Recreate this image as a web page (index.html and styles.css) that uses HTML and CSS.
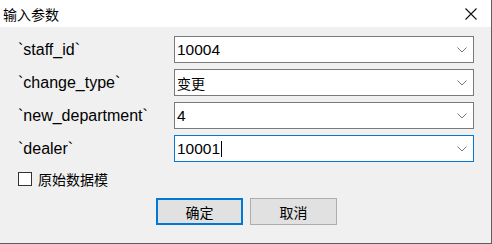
FILE: index.html
```html
<!DOCTYPE html>
<html lang="zh">
<head>
<meta charset="utf-8">
<title>输入参数</title>
<link rel="stylesheet" href="styles.css">
</head>
<body>
<div class="window">
  <div class="titlebar">
    <span class="title">输入参数</span>
    <svg class="close" width="12" height="12" viewBox="0 0 12 12"><path d="M0.5 0.5 L11.5 11.5 M11.5 0.5 L0.5 11.5" stroke="#111" stroke-width="1.1" fill="none"/></svg>
  </div>
  <div class="panel">
    <div class="rows">
      <div class="row">
        <span class="label">`staff_id`</span>
        <div class="combo"><span class="value">10004</span><svg class="chev" width="10" height="6" viewBox="0 0 10 6"><path d="M0.5 0.5 L5 5 L9.5 0.5" stroke="#777" stroke-width="1" fill="none"/></svg></div>
      </div>
      <div class="row">
        <span class="label">`change_type`</span>
        <div class="combo"><span class="value cjk">变更</span><svg class="chev" width="10" height="6" viewBox="0 0 10 6"><path d="M0.5 0.5 L5 5 L9.5 0.5" stroke="#777" stroke-width="1" fill="none"/></svg></div>
      </div>
      <div class="row">
        <span class="label">`new_department`</span>
        <div class="combo"><span class="value">4</span><svg class="chev" width="10" height="6" viewBox="0 0 10 6"><path d="M0.5 0.5 L5 5 L9.5 0.5" stroke="#777" stroke-width="1" fill="none"/></svg></div>
      </div>
      <div class="row">
        <span class="label">`dealer`</span>
        <div class="combo focused"><span class="value">10001<span class="caret"></span></span><svg class="chev" width="10" height="6" viewBox="0 0 10 6"><path d="M0.5 0.5 L5 5 L9.5 0.5" stroke="#777" stroke-width="1" fill="none"/></svg></div>
      </div>
    </div>
    <label class="check">
      <span class="box"></span>
      <span class="check-text">原始数据模</span>
    </label>
    <div class="buttons">
      <button class="btn primary">确定</button>
      <button class="btn">取消</button>
    </div>
  </div>
</div>
</body>
</html>
```
FILE: styles.css
```css
html, body {
  margin: 0;
  padding: 0;
  background: #f0f0f0;
}
.window {
  width: 491px;
  height: 243px;
  border-right: 1px solid #5f5f5f;
  border-bottom: 1px solid #5f5f5f;
  background: #f0f0f0;
  font-family: "Liberation Sans", "Noto Sans CJK SC", sans-serif;
  font-size: 16px;
  color: #000;
  display: flex;
  flex-direction: column;
  overflow: hidden;
}
.titlebar {
  height: 27px;
  background: #fff;
  display: flex;
  align-items: center;
  justify-content: space-between;
  padding: 0 14px 0 3px;
}
.title {
  font-family: "Noto Sans CJK SC", sans-serif;
  font-size: 14px;
  line-height: 1;
}
.close {
  display: block;
}
.panel {
  flex: 1;
  padding: 9px 17px 0 18px;
  display: flex;
  flex-direction: column;
}
.rows {
  display: flex;
  flex-direction: column;
  gap: 6px;
}
.row {
  display: flex;
  align-items: center;
  height: 27px;
}
.label {
  width: 156px;
  flex: none;
  white-space: nowrap;
}
.combo {
  width: 300px;
  height: 27px;
  box-sizing: border-box;
  border: 1px solid #7a7a7a;
  background: #fff;
  display: flex;
  align-items: center;
  justify-content: space-between;
  padding: 0 6px 0 2px;
}
.combo.focused {
  border-color: #0078d7;
}
.value {
  display: flex;
  align-items: center;
  line-height: 1;
  font-size: 15.5px;
}
.cjk {
  font-family: "Noto Sans CJK SC", sans-serif;
  font-size: 14px;
}
.caret {
  display: inline-block;
  width: 1px;
  height: 16px;
  background: #000;
  margin-left: 1px;
}
.chev {
  display: block;
  margin-top: 1px;
}
.check {
  display: flex;
  align-items: center;
  gap: 6px;
  margin-top: 9px;
  height: 15px;
}
.box {
  width: 14px;
  height: 14px;
  box-sizing: border-box;
  border: 1px solid #333;
  background: #fff;
  flex: none;
}
.check-text {
  font-family: "Noto Sans CJK SC", sans-serif;
  font-size: 14px;
  white-space: nowrap;
  line-height: 1;
}
.buttons {
  display: flex;
  gap: 7px;
  margin-top: 12px;
  padding-left: 138px;
}
.btn {
  width: 87px;
  height: 27px;
  box-sizing: border-box;
  border: 1px solid #adadad;
  background: #e1e1e1;
  font-family: "Noto Sans CJK SC", sans-serif;
  font-size: 14px;
  color: #000;
  padding: 0;
  margin: 0;
}
.btn.primary {
  border: 2px solid #0078d7;
}
```
